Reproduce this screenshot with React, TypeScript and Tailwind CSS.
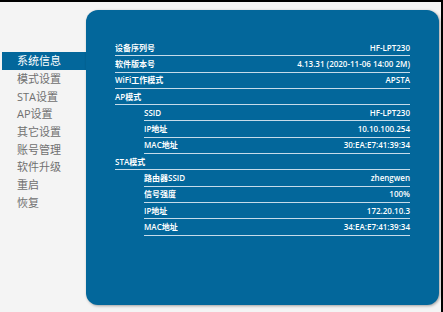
import React from "react";

const menu = ["系统信息", "模式设置", "STA设置", "AP设置", "其它设置", "账号管理", "软件升级", "重启", "恢复"];

type Row = { label: string; value?: string; sub?: boolean };

const rows: Row[] = [
  { label: "设备序列号", value: "HF-LPT230" },
  { label: "软件版本号", value: "4.13.31 (2020-11-06 14:00 2M)" },
  { label: "WiFi工作模式", value: "APSTA" },
  { label: "AP模式" },
  { label: "SSID", value: "HF-LPT230", sub: true },
  { label: "IP地址", value: "10.10.100.254", sub: true },
  { label: "MAC地址", value: "30:EA:E7:41:39:34", sub: true },
  { label: "STA模式" },
  { label: "路由器SSID", value: "zhengwen", sub: true },
  { label: "信号强度", value: "100%", sub: true },
  { label: "IP地址", value: "172.20.10.3", sub: true },
  { label: "MAC地址", value: "34:EA:E7:41:39:34", sub: true },
];

export default function App() {
  return (
    <div
      className="w-[443px] h-[312px] bg-[#f4f4f4] border-t-2 border-r-2 border-black flex overflow-hidden"
      style={{ fontFamily: '"Open Sans", "Noto Sans CJK SC", sans-serif' }}
    >
      <nav className="w-[86px] shrink-0 pt-[50px] pl-[2px]">
        {menu.map((m, i) => (
          <div
            key={i}
            className={
              i === 0
                ? "h-[17.7px] pl-[15px] flex items-center text-[11px] leading-none text-white bg-[#03679b]"
                : "h-[17.7px] pl-[15px] flex items-center text-[11px] leading-none text-[#707070]"
            }
          >
            {m}
          </div>
        ))}
      </nav>
      <main className="mt-[8px] w-[353px] h-[295px] rounded-[12px] bg-[#03679b] shadow-[1px_1px_3px_rgba(0,0,0,0.35)] pt-[30px] px-[29px]">
        {rows.map((r, i) => (
          <div
            key={i}
            className={
              r.sub
                ? "ml-[29px] h-[16.3px] border-b border-[#c5dbea] flex items-center justify-between text-[8px] leading-none font-semibold text-white"
                : "h-[16.3px] border-b border-[#c5dbea] flex items-center justify-between text-[8px] leading-none font-semibold text-white"
            }
          >
            <span>{r.label}</span>
            <span>{r.value}</span>
          </div>
        ))}
      </main>
    </div>
  );
}
